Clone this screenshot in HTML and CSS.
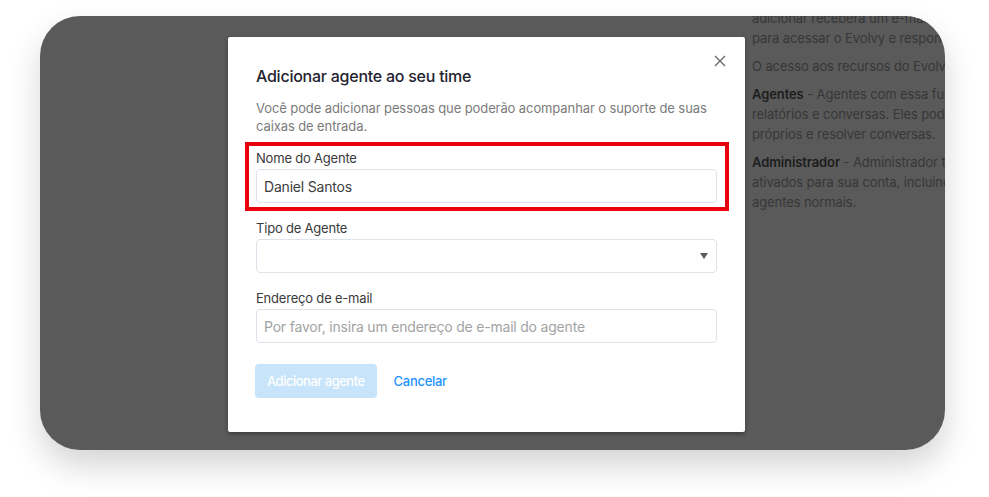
FILE: index.html
```html
<!DOCTYPE html>
<html lang="pt-BR">
<head>
<meta charset="utf-8">
<title>Adicionar agente</title>
<link rel="stylesheet" href="styles.css">
</head>
<body>
<div class="frame">
  <div class="page">
    <div class="help">
      <p>adicionar receberá um e-mail com um convite<br>para acessar o Evolvy e responder às conversas.</p>
      <p>O acesso aos recursos do Evolvy é baseado nas funções:</p>
      <p><b>Agentes</b> - Agentes com essa função podem ver<br>relatórios e conversas. Eles podem atribuir a si<br>próprios e resolver conversas.</p>
      <p><b>Administrador</b> - Administrador terá acesso a recursos<br>ativados para sua conta, incluindo o acesso de<br>agentes normais.</p>
    </div>
  </div>
  <div class="modal">
    <button class="close" aria-label="Fechar">
      <svg width="12" height="12" viewBox="0 0 12 12"><path d="M1 1L11 11M11 1L1 11" stroke="#666" stroke-width="1.3" fill="none"/></svg>
    </button>
    <h2 class="title">Adicionar agente ao seu time</h2>
    <p class="desc">Você pode adicionar pessoas que poderão acompanhar o suporte de suas caixas de entrada.</p>
    <div class="field highlight">
      <label class="label">Nome do Agente</label>
      <div class="input">Daniel Santos</div>
    </div>
    <div class="field">
      <label class="label">Tipo de Agente</label>
      <div class="input select"><span class="caret"></span></div>
    </div>
    <div class="field">
      <label class="label">Endereço de e-mail</label>
      <div class="input placeholder">Por favor, insira um endereço de e-mail do agente</div>
    </div>
    <div class="actions">
      <button class="btn-primary">Adicionar agente</button>
      <button class="btn-link">Cancelar</button>
    </div>
  </div>
</div>
</body>
</html>
```
FILE: styles.css
```css
* { box-sizing: border-box; }
html, body { margin: 0; padding: 0; background: #ffffff; }
body {
  font-family: Inter, "Noto Sans", "Liberation Sans", sans-serif;
  width: 989px;
  height: 497px;
  overflow: hidden;
  padding-top: 16px;
  padding-left: 40px;
}
.frame {
  position: relative;
  width: 905px;
  height: 434px;
  border-radius: 40px;
  background: #5a5a5a;
  overflow: hidden;
  box-shadow: 0 16px 32px rgba(0,0,0,0.17);
}
.page {
  padding-left: 712px;
  margin-top: -8px;
}
.help {
  white-space: nowrap;
  font-size: 13px;
  line-height: 20px;
  color: #373737;
  letter-spacing: -0.1px;
}
.help p { margin: 0 0 8px 0; }
.help b { font-weight: 600; color: #1d1d1d; }

.modal {
  position: absolute;
  left: 188px;
  top: 21px;
  width: 517px;
  background: #ffffff;
  border-radius: 2px;
  padding: 27px 28px 34px 28px;
  box-shadow: 0 2px 4px rgba(0,0,0,0.35);
}
.close {
  position: absolute;
  top: 18px;
  right: 19px;
  width: 12px;
  height: 12px;
  padding: 0;
  border: 0;
  background: none;
  display: flex;
}
.title {
  margin: 0;
  font-size: 16px;
  line-height: 24px;
  font-weight: 500;
  color: #1f2430;
  letter-spacing: -0.25px;
}
.desc {
  margin: 11px 0 14px 0;
  font-size: 13px;
  line-height: 18px;
  color: #7b7b7b;
  letter-spacing: -0.1px;
}
.field { position: relative; margin-bottom: 16px; }
.highlight::after {
  content: "";
  position: absolute;
  top: -7px;
  bottom: -8px;
  left: -11px;
  right: -12px;
  border: 4px solid #e8000c;
  pointer-events: none;
}
.label {
  display: block;
  font-size: 13px;
  line-height: 18px;
  color: #3a3a3a;
  margin-bottom: 2px;
  letter-spacing: -0.2px;
}
.input {
  height: 34px;
  border: 1px solid #dde3ea;
  border-radius: 4px;
  padding: 0 7px;
  display: flex;
  align-items: center;
  font-size: 14px;
  color: #3d3d3d;
  letter-spacing: -0.2px;
}
.placeholder { color: #a3a3a3; }
.select { justify-content: flex-end; padding-right: 8px; }
.caret {
  width: 0;
  height: 0;
  border-left: 4px solid transparent;
  border-right: 4px solid transparent;
  border-top: 6px solid #5a5a5a;
}
.actions {
  display: flex;
  align-items: center;
  margin-top: 21px;
}
.btn-primary {
  margin-left: -1px;
  height: 34px;
  padding: 0 12px;
  border: 0;
  border-radius: 4px;
  background: #c7e4fa;
  color: #ffffff;
  font-family: inherit;
  font-size: 13px;
  font-weight: 500;
  letter-spacing: -0.5px;
}
.btn-link {
  margin-left: 17px;
  padding: 0;
  border: 0;
  background: none;
  color: #1f93ff;
  font-family: inherit;
  font-size: 13px;
  font-weight: 500;
  letter-spacing: -0.3px;
}
```
